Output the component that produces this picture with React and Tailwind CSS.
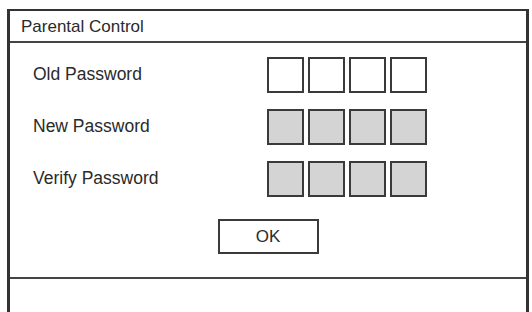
export default function App() {
  const font = { fontFamily: '"Liberation Sans", Arial, Helvetica, sans-serif' };
  const Box = ({ filled }) => (
    <div
      className={`w-[37px] h-[36px] border-2 border-[#3a3a3a] ${filled ? 'bg-[#d4d4d4]' : 'bg-white'}`}
    />
  );
  const rows = [
    { label: 'Old Password', filled: false },
    { label: 'New Password', filled: true },
    { label: 'Verify Password', filled: true },
  ];
  return (
    <div className="w-[532px] h-[312px] bg-white overflow-hidden pt-[9px] pl-[7px]" style={font}>
      <div className="w-[522px] h-[330px] border-l-[3px] border-t-2 border-r-[3px] border-[#333] flex flex-col text-[#2a2a2a]">
        <div className="h-[32px] border-b-2 border-[#444] flex items-center pl-[11px] text-[17px] leading-none">
          Parental Control
        </div>
        <div className="h-[236px] border-b-2 border-[#444] pt-[14px] flex flex-col">
          <div className="flex flex-col gap-[16px]">
            {rows.map((r) => (
              <div key={r.label} className="flex items-center h-[36px] pl-[23px]">
                <div className="w-[234px] text-[17.5px] leading-none">{r.label}</div>
                <div className="flex gap-[4px]">
                  <Box filled={r.filled} />
                  <Box filled={r.filled} />
                  <Box filled={r.filled} />
                  <Box filled={r.filled} />
                </div>
              </div>
            ))}
          </div>
          <div className="flex justify-center mt-[22px]">
            <div className="w-[101px] h-[35px] border-2 border-[#3a3a3a] flex items-center justify-center text-[17px] leading-none">
              OK
            </div>
          </div>
        </div>
        <div className="flex-1" />
      </div>
    </div>
  );
}
